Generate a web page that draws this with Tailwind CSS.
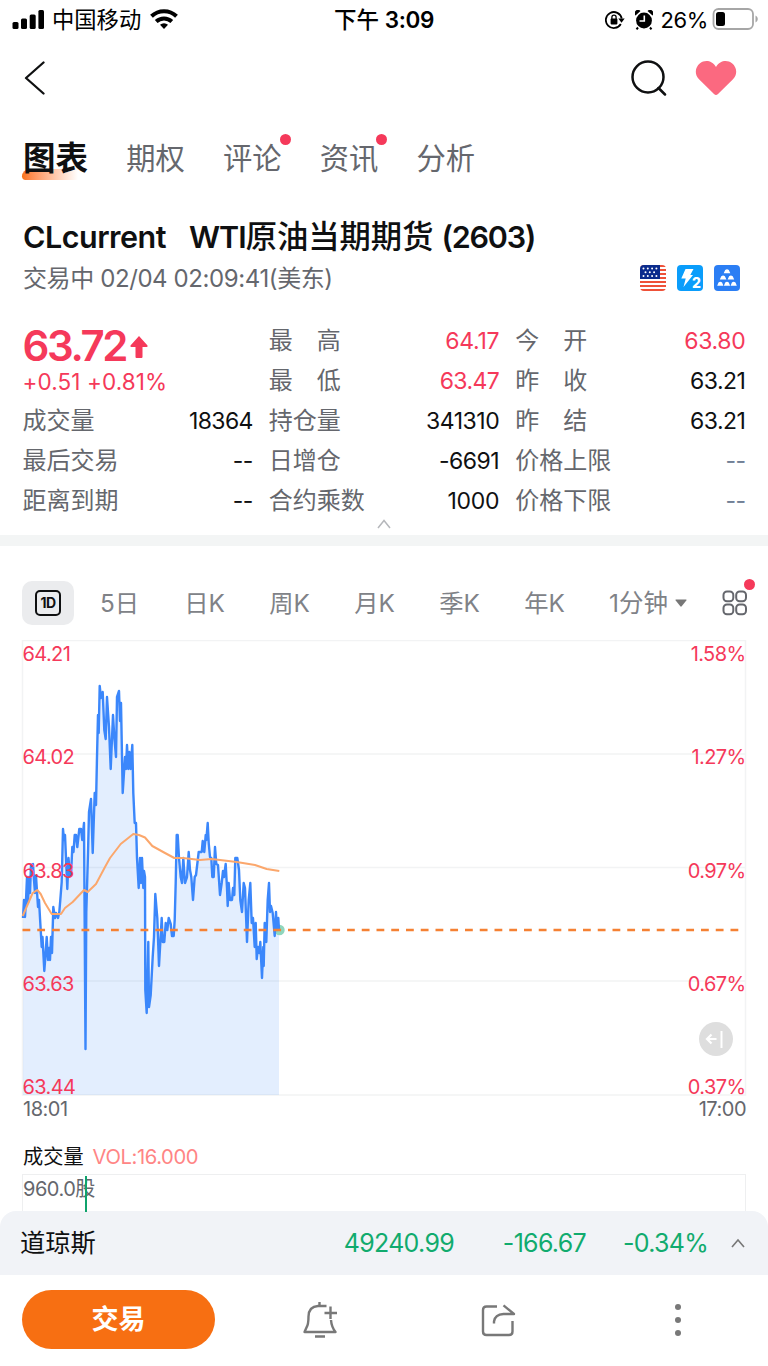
<!DOCTYPE html>
<html lang="zh-CN">
<head>
    <meta charset="UTF-8">
    <meta name="viewport" content="width=device-width, initial-scale=1.0">
    <title>WTI原油当期期货 (2603)</title>
    <script src="https://cdn.jsdelivr.net/npm/@tailwindcss/browser@4"></script>
</head>
<body class="bg-white font-['Inter','Noto_Sans_CJK_SC',sans-serif] text-[#0f1011]">
    <div class="relative w-[768px] h-[1366px] overflow-hidden flex flex-col">

        <!-- status bar -->
        <header class="h-10 shrink-0 grid grid-cols-3 items-center text-black leading-none whitespace-nowrap">
            <div class="flex items-center pl-3">
                <svg class="w-8 h-5" viewBox="0 0 32 20">
                    <rect x="0.5" y="12" width="6" height="7" rx="1.5"/>
                    <rect x="9" y="8.500" width="6" height="10.500" rx="1.500"/>
                    <rect x="17.700" y="4.500" width="6" height="14.500" rx="1.500"/>
                    <rect x="26.400" y="0" width="5.600" height="19" rx="1.500"/>
                </svg>
                <span class="ml-2 text-[22.300px]">中国移动</span>
                <svg class="ml-[9px] -mt-0.5 w-7 h-5" viewBox="0 0 28 20">
                    <g fill="none" stroke="#000" stroke-width="4">
                        <path d="M1.500 7.300a18 18 0 0 1 25 0"/>
                        <path d="M6.200 12.500a11.500 11.500 0 0 1 15.600 0"/>
                    </g>
                    <path d="M14 20l-4-4.200a6 6 0 0 1 8 0z"/>
                </svg>
            </div>
            <div class="text-center text-[22.500px] font-semibold"><span class="font-medium">下午</span> <span class="tracking-[-0.400px]">3:09</span></div>
            <div class="flex items-center justify-end pr-2.5">
                <svg class="w-5 h-5" viewBox="0 0 20 20">
                    <path d="M15.800 14a8 8 0 1 1 .9-5.500" fill="none" stroke="#000" stroke-width="1.800"/>
                    <path d="M13.300 8.600h6.400l-3.200 4.200z"/>
                    <rect x="5.600" y="8.600" width="6.800" height="5.800" rx="0.800"/>
                    <path d="M6.900 9V7.300a2.100 2.100 0 0 1 4.200 0V9" fill="none" stroke="#000" stroke-width="1.300"/>
                </svg>
                <svg class="ml-2.5 w-[18px] h-5" viewBox="0 0 18 20">
                    <circle cx="9" cy="10.500" r="7.900"/>
                    <path d="M3 17.500l-1.500 1.800M15 17.500l1.500 1.800" stroke="#000" stroke-width="2"/>
                    <path d="M0.500 5.600a3 3 0 0 1 5-4.600zM17.500 5.600a3 3 0 0 0-5-4.600z"/>
                    <path d="M9.300 5.500V11H4.500" fill="none" stroke="#fff" stroke-width="1.600"/>
                </svg>
                <span class="ml-2 text-[22px] tracking-[-0.4px]">26%</span>
                <svg class="ml-1 -mt-0.5 w-[46px] h-[22px]" viewBox="0 0 46 22">
                    <rect x="1.500" y="1" width="39.500" height="20" rx="5" fill="none" stroke="#a6a6a6" stroke-width="1.800"/>
                    <rect x="4" y="4" width="9" height="14" rx="2.500"/>
                    <path d="M43.500 7.500c3 1.500 3 5.500 0 7z" fill="#a6a6a6"/>
                </svg>
            </div>
        </header>

        <!-- nav -->
        <nav class="h-[76px] shrink-0 flex items-center justify-between pl-6 pr-[31px]">
            <svg class="w-6 h-[34px]" viewBox="0 0 24 34" fill="none" stroke="#0f1011" stroke-width="2.300" stroke-linejoin="round" stroke-linecap="round">
                <path d="M19.500 1.500L2 17l17.500 15.500"/>
            </svg>
            <div class="flex items-center gap-7">
                <svg class="w-9 h-9" viewBox="0 0 36 36" fill="none" stroke="#0f1011" stroke-width="2.500" stroke-linecap="round">
                    <circle cx="17" cy="17" r="15.500"/>
                    <path d="M27.500 28l6.500 6.500"/>
                </svg>
                <svg class="w-[42px] h-9" viewBox="0 0 42 36" fill="#fb6980">
                    <path d="M21 7C17 0 9.500-.3 5 3.300-.2 7.600-.6 14.300 4 19.200L19 34.100q2 1.700 4 0L38 19.200c4.600-4.900 4.200-11.600-1-15.900C32.500-.3 25 0 21 7z"/>
                </svg>
            </div>
        </nav>

        <!-- tabs -->
        <div class="h-[84px] shrink-0 pt-0.5 flex items-center gap-[38.200px] pl-[23px] text-[29.300px] leading-none text-[#65676d]">
            <div class="relative">
                <div class="absolute -left-px top-[26px] w-14 h-[11px] rounded-bl rounded-tl-lg bg-linear-to-r from-[#f97316] to-white"></div>
                <span class="relative text-[32.500px] font-bold text-[#0f1011]">图表</span>
            </div>
            <div>期权</div>
            <div class="relative">评论<i class="absolute -right-[9px] -top-2.5 size-[11px] rounded-full bg-[#f5395a]"></i></div>
            <div class="relative">资讯<i class="absolute -right-[9px] -top-2.5 size-[11px] rounded-full bg-[#f5395a]"></i></div>
            <div>分析</div>
        </div>

        <!-- title -->
        <section class="h-[112px] shrink-0 pl-[23px] pr-7 pt-[18px]">
            <h1 class="h-[38px] flex items-center whitespace-pre font-semibold text-[30.500px] leading-none"><span class="tracking-[-0.500px]">CLcurrent</span><span class="ml-[23px] tracking-[-1px]">WTI</span><span class="pt-0.5 font-medium text-[31.300px]">原油当期期货</span><span class="ml-2 tracking-[-1.200px]">(2603)</span></h1>
            <div class="h-11 flex items-center justify-between text-[#65676d]">
                <span class="pt-px text-[24px] leading-none whitespace-pre tracking-[-0.4px]">交易中 02/04 02:09:41(美东)</span>
                <div class="flex gap-[11px]">
                    <svg class="size-[26px] rounded" viewBox="0 0 26 26">
                        <path fill="#fff" d="M0 0h26v26H0z"/>
                        <path stroke="#ee5138" stroke-width="2" d="M0 1h26M0 5h26M0 9h26M0 13h26M0 17h26M0 21h26M0 25h26"/>
                        <path fill="#0b2c8d" d="M0 0h20v14H0z"/>
                        <path stroke="#fff" stroke-width="2" stroke-linecap="round" stroke-dasharray="0 4.300" d="M3.500 3.500h14M5.500 7.200h11M3.500 11h14"/>
                    </svg>
                    <svg class="size-[26px] rounded" viewBox="0 0 26 26">
                        <path fill="#0a9dfb" d="M0 0h26v26H0z"/>
                        <path fill="#fff" d="M8.500 4h8l-3.200 6H16L6.500 22l2.200-8.500H4.300z"/>
                        <text x="15" y="23" font-size="14" font-weight="800" fill="#fff" font-family="Inter">2</text>
                    </svg>
                    <svg class="size-[26px] rounded" viewBox="0 0 26 26">
                        <path fill="#2b7ef4" d="M0 0h26v26H0z"/>
                        <g fill="#fff">
                            <path d="M9.700 8.300l1.500-3.300q1.800-1.500 3.600 0l1.500 3.300z"/>
                            <path d="M5.800 14.600l1.500-3.300q1.800-1.500 3.600 0l1.500 3.300zM13.600 14.600l1.500-3.300q1.800-1.500 3.600 0l1.500 3.300z"/>
                            <path d="M3.200 20.800l1.300-3.300q1.800-1.500 3.600 0l1.300 3.300zM9.900 20.800l1.300-3.300q1.800-1.500 3.600 0l1.300 3.300zM16.600 20.800l1.300-3.300q1.800-1.500 3.600 0l1.300 3.300z"/>
                        </g>
                    </svg>
                </div>
            </div>
        </section>

        <!-- quote -->
        <section class="h-[223px] shrink-0 pt-[9px] pl-[22.500px] pr-[22.500px] relative">
            <div class="grid grid-cols-3 gap-x-4 text-[24px] leading-none text-[#65676d]">
                <div>
                    <div class="h-20 flex flex-col text-[#f5395a]">
                        <div class="h-[45px] pt-1 flex items-center text-[42px] font-semibold tracking-[-2.400px]">
                            <span>63.72</span>
                            <svg class="ml-1 mt-0.5 w-[18px] h-[22px]" viewBox="0 0 18 22" fill="#f5395a"><path d="M9 0l8.500 9.500q.5 1.500-1 1.500H12.500v10q0 1-1 1h-5q-1 0-1-1V11H1.500Q0 11 .5 9.500z"/></svg>
                        </div>
                        <div class="h-8 flex items-center text-[22.500px] tracking-[0.100px]">+0.51 +0.81%</div>
                    </div>
                    <div class="h-10 flex items-center justify-between"><span>成交量</span><b class="font-normal text-[23px] tracking-[-0.600px] text-[#0f1011]">18364</b></div>
                    <div class="h-10 flex items-center justify-between"><span>最后交易</span><b class="font-normal text-[23px] tracking-[-0.600px] text-[#0f1011]">--</b></div>
                    <div class="h-10 flex items-center justify-between"><span>距离到期</span><b class="font-normal text-[23px] tracking-[-0.600px] text-[#0f1011]">--</b></div>
                </div>
                <div>
                    <div class="h-10 flex items-center justify-between"><span>最　高</span><b class="font-normal text-[23px] tracking-[-0.300px] text-[#f5395a]">64.17</b></div>
                    <div class="h-10 flex items-center justify-between"><span>最　低</span><b class="font-normal text-[23px] tracking-[-0.600px] text-[#f5395a]">63.47</b></div>
                    <div class="h-10 flex items-center justify-between"><span>持仓量</span><b class="font-normal text-[23px] tracking-[-0.500px] text-[#0f1011]">341310</b></div>
                    <div class="h-10 flex items-center justify-between"><span>日增仓</span><b class="font-normal text-[23px] tracking-[-0.500px] text-[#0f1011]">-6691</b></div>
                    <div class="h-10 flex items-center justify-between"><span>合约乘数</span><b class="font-normal text-[23px] tracking-[-0.300px] text-[#0f1011]">1000</b></div>
                </div>
                <div>
                    <div class="h-10 flex items-center justify-between"><span>今　开</span><b class="font-normal text-[23px] tracking-[-0.300px] text-[#f5395a]">63.80</b></div>
                    <div class="h-10 flex items-center justify-between"><span>昨　收</span><b class="font-normal text-[23px] tracking-[-0.500px] text-[#0f1011]">63.21</b></div>
                    <div class="h-10 flex items-center justify-between"><span>昨　结</span><b class="font-normal text-[23px] tracking-[-0.500px] text-[#0f1011]">63.21</b></div>
                    <div class="h-10 flex items-center justify-between"><span>价格上限</span><b class="font-normal text-[23px] tracking-[-0.600px] text-[#718096]">--</b></div>
                    <div class="h-10 flex items-center justify-between"><span>价格下限</span><b class="font-normal text-[23px] tracking-[-0.600px] text-[#718096]">--</b></div>
                </div>
            </div>
            <svg class="absolute left-[377px] top-[207px] w-3.5 h-2.5" viewBox="0 0 14 10" fill="none" stroke="#b5b7bb" stroke-width="1.500"><path d="M1 9l6-7.500L13 9"/></svg>
        </section>
        <div class="h-[11px] shrink-0 bg-[#f3f5f5]"></div>

        <!-- periods -->
        <div class="h-[94px] shrink-0 pt-5 flex items-center pl-[22px] text-[24.300px] leading-none text-[#808287]">
            <div class="w-[52px] h-11 mr-[3px] rounded-[10px] bg-[#ebecee] flex items-center justify-center">
                <div class="w-[26px] h-[26px] rounded-[5px] border-2 border-[#0f1011] text-[#0f1011] text-[14px] font-bold tracking-[-0.500px] flex items-center justify-center">1D</div>
            </div>
            <div class="w-[85px] pt-px text-center">5日</div>
            <div class="w-[85px] pt-px text-center">日K</div>
            <div class="w-[85px] pt-px text-center">周K</div>
            <div class="w-[85px] pt-px text-center">月K</div>
            <div class="w-[85px] pt-px text-center">季K</div>
            <div class="w-[85px] pt-px text-center">年K</div>
            <div class="ml-[22px] flex items-center text-[24.500px]">1分钟
                <svg class="ml-[7px] w-3 h-2" viewBox="0 0 12 8"><path d="M1 .5h10q1 0 .3 1L6.700 7.300q-.7.700-1.400 0L.7 1.500Q0 .5 1 .5z" fill="#777"/></svg>
            </div>
            <div class="relative ml-[35px]">
                <svg class="size-[26px]" viewBox="0 0 26 26" fill="none" stroke="#65676d" stroke-width="2">
                    <rect x="1.500" y="1.500" width="9.800" height="9.800" rx="3.500"/><rect x="14.200" y="1.500" width="9.800" height="9.800" rx="3.500"/>
                    <rect x="1.500" y="14.400" width="9.800" height="9.800" rx="3.500"/><rect x="14.200" y="14.400" width="9.800" height="9.800" rx="3.500"/>
                </svg>
                <i class="absolute -right-[7px] -top-[11px] size-[11px] rounded-full bg-[#f5395a]"></i>
            </div>
        </div>

        <!-- price chart -->
        <section class="relative h-[482px] shrink-0">
            <svg class="absolute inset-0 w-[768px] h-[456px]" viewBox="0 640 768 456" fill="none">
                <path d="M22.500 640.500h723v454.500h-723zM22.500 754h723M22.500 867.500h723M22.500 981h723" stroke="#f2f3f4" stroke-width="1.500"/>
                <path id="area" fill="#3b87fb" fill-opacity="0.140"/>
                <circle cx="279.500" cy="930" r="5.200" fill="#8fd6bd"/>
                <path id="price" stroke="#3b87fb" stroke-width="2.400" stroke-linejoin="round"/>
                <path id="average" stroke="#fba76c" stroke-width="2" stroke-linejoin="round"/>
                <path d="M22.500 930H745" stroke="#f58133" stroke-width="2.400" stroke-dasharray="7.800 6.950"/>
                <circle cx="716" cy="1039" r="17" fill="#dedede"/>
                <path d="M716.500 1039h-9M711.500 1034.500l-4.500 4.500 4.500 4.500" stroke="#fff" stroke-width="2.200"/>
                <path d="M721.500 1031v17" stroke="#fff" stroke-width="2"/>
            </svg>
            <div class="absolute left-[22.500px] right-[22.500px] top-0 h-[456px] text-[20px] leading-none tracking-[-0.600px] text-[#f5395a]">
                <div class="absolute inset-x-0 top-1 flex justify-between"><span>64.21</span><span>1.58%</span></div>
                <div class="absolute inset-x-0 top-[107px] flex justify-between"><span>64.02</span><span>1.27%</span></div>
                <div class="absolute inset-x-0 top-[221px] flex justify-between"><span>63.83</span><span>0.97%</span></div>
                <div class="absolute inset-x-0 top-[334px] flex justify-between"><span>63.63</span><span>0.67%</span></div>
                <div class="absolute inset-x-0 top-[437px] flex justify-between"><span>63.44</span><span>0.37%</span></div>
            </div>
            <div class="absolute left-[23px] right-[22px] top-[459px] flex justify-between text-[20px] leading-none tracking-[-0.500px] text-[#65676d]"><span>18:01</span><span>17:00</span></div>
        </section>

        <!-- volume -->
        <section class="h-[89px] shrink-0 pt-5 px-[22px]">
            <div class="h-8 -mt-px mb-px pl-px flex items-center gap-[9px] text-[20.200px] leading-none"><span>成交量</span><span class="text-[#ff8585] tracking-[-0.400px]">VOL:16.000</span></div>
            <div class="relative h-[37px] border border-b-0 border-[#eeeff0] pt-1 text-[20px] leading-none text-[#65676d]">
                <i class="absolute left-[62px] top-px w-[2px] h-9 bg-[#0fa36c]"></i>
                <span class="tracking-[-0.500px]">960.0股</span>
            </div>
        </section>

        <!-- index strip -->
        <div class="h-16 shrink-0 rounded-t-2xl bg-[#f1f3f7] pl-5 pr-[23px] flex items-center text-[25.300px] leading-none">
            <span>道琼斯</span>
            <div class="ml-auto flex items-center text-[25px] tracking-[-0.700px] text-[#11ab6e]">
                <span>49240.99</span>
                <span class="w-[132px] text-right">-166.67</span>
                <span class="w-[122px] text-right">-0.34%</span>
                <svg class="ml-[23px] w-3.5 h-2.5" viewBox="0 0 14 10" fill="none" stroke="#777" stroke-width="1.600"><path d="M1 9l6-7L13 9"/></svg>
            </div>
        </div>

        <!-- actions -->
        <footer class="h-[91px] shrink-0 pl-[22px] pt-[15px] flex items-start">
            <button class="w-[193px] h-[59px] rounded-full bg-[#f76f12] text-white text-[27px] leading-none font-bold">交易</button>
            <div class="flex-1 h-[59px] flex items-center pl-[87px]">
                <svg class="w-9 h-9" viewBox="0 0 36 36" fill="none" stroke="#787878" stroke-width="2.400" stroke-linejoin="round">
                    <path d="M24.500 4H16Q6.800 4.500 6.500 14.500q0 8-2 11L2.500 30h31q-4-5-4.500-12"/>
                    <path d="M17.500 0v4M28.500 4.500v12.500M22.500 11H35M13 34.500h10"/>
                </svg>
                <svg class="ml-[143px] mt-0.5 w-[35px] h-[34px]" viewBox="0 0 35 34" fill="none" stroke="#787878" stroke-width="2.400" stroke-linejoin="round">
                    <path d="M16 2.500H5.500Q2 2.500 2 6v21.500Q2 31 5.500 31H28q3.500 0 3.500-3.500V17"/>
                    <path d="M13 19.500v-2q1-7 9.500-7.500h10.500L22.500 1.300"/>
                </svg>
                <svg class="ml-[158px] w-2 h-[34px]" viewBox="0 0 8 34" fill="#787878"><circle cx="4" cy="4" r="3"/><circle cx="4" cy="17" r="3"/><circle cx="4" cy="30" r="3"/></svg>
            </div>
        </footer>
    </div>

    <script>
        // x,y pairs in page pixels
        const price = "23,918 24,900 25,917 26,900 27,877 28,903 29,877 30,893 31,865 33,864 34,880 35,893 36,876 38,907 39,900 40,918 41.7,947 42.5,937 44.3,971 45.5,955 46.7,937 48,960 49,948 50,960 51,937 52,953 53.3,907 55,918 56,913 58,918 59.3,912 60.3,900 61.7,882 63,829 64,840 65,835 66,858 67.3,889 68.5,858 70,876 71,876 72.3,847 73.5,852 74.7,835 76,835 77.3,847 79.3,829 81,829 82.3,840 84,823 85.5,1049 86.3,912 88,853 89,812 91,799 92.7,853 94.7,793 96,805 97,757 98,715 98.7,733 99.7,686 101,698 102.7,692 104.3,730 105.7,739 107,697 109,727 110.7,769 113,715 114.3,737 116,757 117,697 119,691 120,721 121,703 122.7,793 125,757 126,769 127,745 128.3,769 129.4,752 130.6,769 132.3,745 133.3,793 134.7,823 136,823 137,858 138.7,888 140,858 141,883 142,858 143.3,888 144,871 145,877 145.3,990 146.7,1013 148.3,942 149,1007 150.7,995 152.7,957 154,937 155.3,894 157.3,918 159,966 161.7,918 162.7,942 164.3,942 165.7,923 167.3,930 168.7,918 170.7,924 172,936 173.7,936 174.7,920 175.7,883 176.7,835 177.7,835 179,858 180.7,877 182,883 183.3,858 185,883 187,877 188.7,852 190,870 191.3,877 193,900 194.7,877 196,875 197.3,864 198.7,852 201.7,852 202.7,841 204.3,852 205.7,835 206.3,840 207.7,823 208.7,843 210,857 211.3,858 212.3,877 213.7,877 215,847 216.3,864 218,865 220,895 221.7,883 223,871 224,877 225.7,864 227,888 227.7,906 228.7,883 230,900 232,900 233,888 234.3,895 235.3,858 237.3,858 239,870 240.3,900 242,912 243.7,883 245,888 247,942 248.7,900 250.3,883 251.7,923 253,918 254.7,947 255.7,923 256.7,959 258,947 259.3,953 260.3,942 262,978 263.3,947 263.7,966 264.7,923 266.3,942 267.7,900 269,883 270,912 271,906 272.7,913 274.7,936 276,912 277,930 278.3,918 279,930";
        const average = "22.7,916 28.3,903 32.7,893 37.3,890 40.7,894 45,903 51.7,914 61,914 65,908 72.7,902 84,890 87.7,892 96,884 105,867 110,858 120.7,844 133.3,834 139,835 145,837.5 152.3,846 165,853 174.3,858 183,858 200,860 211.7,859 236.7,862 255,865 266.7,869 279.3,871";
        document.getElementById('price').setAttribute('d', 'M' + price);
        document.getElementById('area').setAttribute('d', 'M23,1095 L' + price + ' L279,1095Z');
        document.getElementById('average').setAttribute('d', 'M' + average);
    </script>
</body>
</html>
